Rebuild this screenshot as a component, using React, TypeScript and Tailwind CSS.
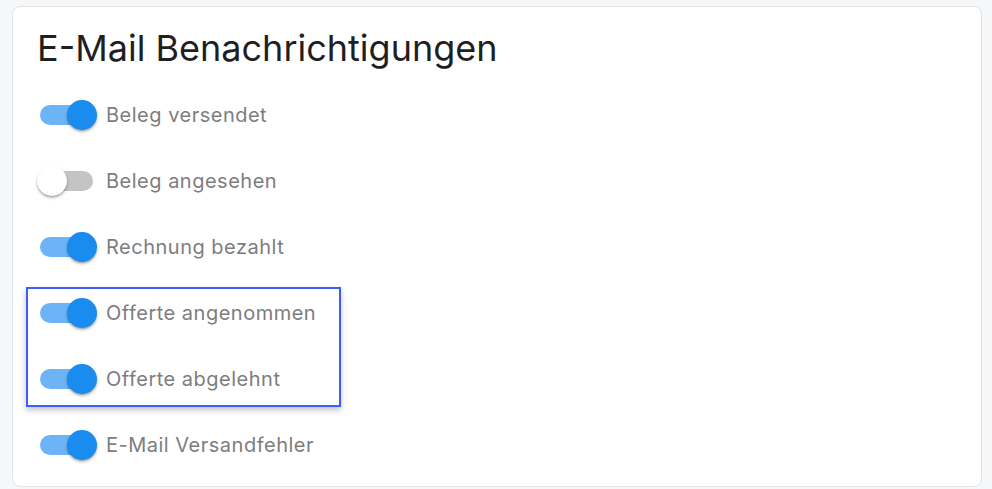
import React from "react";

const font = { fontFamily: "Inter, 'Noto Sans', sans-serif" };

const Toggle = ({ on }: { on: boolean }) => (
  <div className="relative w-[60px] h-[30px] shrink-0">
    <div
      className={
        "absolute left-[3px] top-[5px] w-[53px] h-[20px] rounded-full " +
        (on ? "bg-[#6cb4f5]" : "bg-[#c4c4c4]")
      }
    />
    <div
      className={
        "absolute top-0 w-[30px] h-[30px] rounded-full shadow-[0_2px_3px_rgba(0,0,0,0.28),0_1px_1px_rgba(0,0,0,0.14)] " +
        (on ? "left-[30px] bg-[#1a8bef]" : "left-0 bg-white")
      }
    />
  </div>
);

const Row = ({ label, on }: { label: string; on: boolean }) => (
  <div className="flex items-center h-[66px] gap-[9px]">
    <Toggle on={on} />
    <span className="text-[20px] tracking-[0.5px] text-[#7d7d7d] leading-none">{label}</span>
  </div>
);

const App = () => {
  return (
    <div className="w-full h-[489px] bg-[#f6f7f9] pt-[6px] pl-[12px] pr-[10px] pb-[2px]" style={font}>
      <div className="h-full bg-white border border-[#e2e4e8] rounded-lg pt-[20px] pl-[24px] flex flex-col">
        <h1 className="text-[36px] leading-[42px] text-[#1f1f1f] font-normal">
          E-Mail Benachrichtigungen
        </h1>
        <div className="mt-[13px] flex flex-col">
          <Row label="Beleg versendet" on />
          <Row label="Beleg angesehen" on={false} />
          <Row label="Rechnung bezahlt" on />
          <div className="relative">
            <Row label="Offerte angenommen" on />
            <Row label="Offerte abgelehnt" on />
            <div className="absolute left-[-11px] top-[7px] w-[315px] h-[120px] border-2 border-[#3d5bff] shadow-[0_3px_6px_rgba(0,0,0,0.25)] pointer-events-none" />
          </div>
          <Row label="E-Mail Versandfehler" on />
        </div>
      </div>
    </div>
  );
};

export default App;
